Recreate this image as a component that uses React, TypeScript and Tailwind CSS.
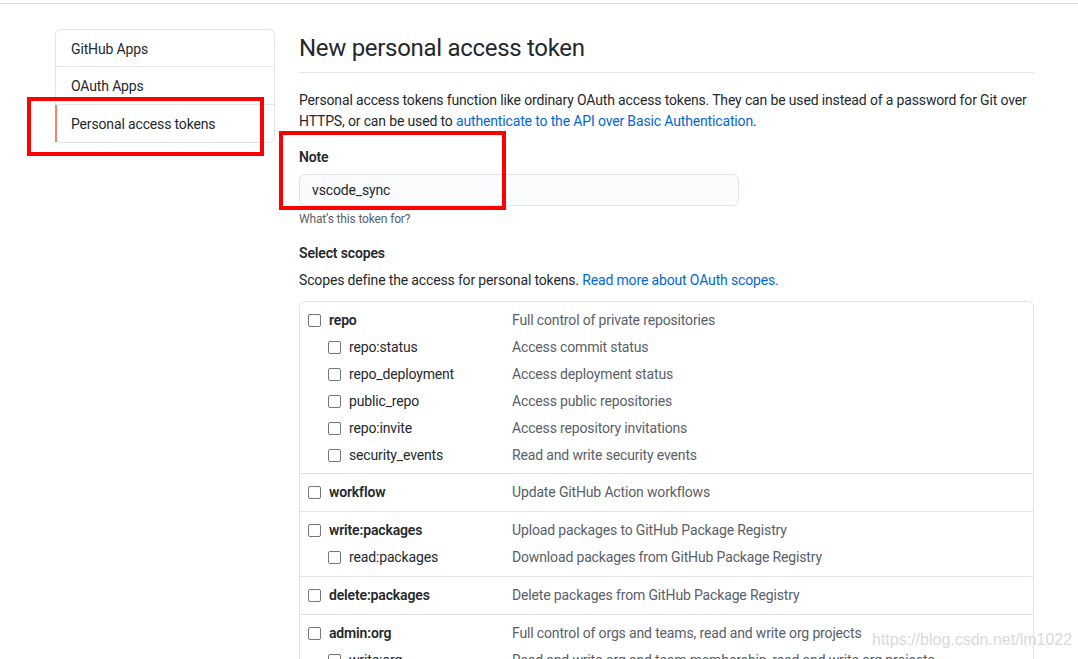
import React from "react";

type Scope = { name: string; desc: string; sub?: boolean };

const groups: Scope[][] = [
  [
    { name: "repo", desc: "Full control of private repositories" },
    { name: "repo:status", desc: "Access commit status", sub: true },
    { name: "repo_deployment", desc: "Access deployment status", sub: true },
    { name: "public_repo", desc: "Access public repositories", sub: true },
    { name: "repo:invite", desc: "Access repository invitations", sub: true },
    { name: "security_events", desc: "Read and write security events", sub: true },
  ],
  [{ name: "workflow", desc: "Update GitHub Action workflows" }],
  [
    { name: "write:packages", desc: "Upload packages to GitHub Package Registry" },
    { name: "read:packages", desc: "Download packages from GitHub Package Registry", sub: true },
  ],
  [{ name: "delete:packages", desc: "Delete packages from GitHub Package Registry" }],
  [
    { name: "admin:org", desc: "Full control of orgs and teams, read and write org projects" },
    { name: "write:org", desc: "Read and write org and team membership, read and write org projects", sub: true },
  ],
];

function Box() {
  return <span className="inline-block w-[13px] h-[13px] border border-[#767676] rounded-[2px] bg-white shrink-0" />;
}

function Row({ s }: { s: Scope }) {
  return (
    <div className="flex items-center h-[27px] pl-[8px]">
      <div className={"flex items-center w-[204px] shrink-0 " + (s.sub ? "pl-[20px]" : "")}>
        <Box />
        <span className={"ml-[8px] text-[#24292e] " + (s.sub ? "font-normal" : "font-semibold")}>{s.name}</span>
      </div>
      <span className="text-[#586069] whitespace-nowrap">{s.desc}</span>
    </div>
  );
}

export default function App() {
  return (
    <div
      className="relative w-[1078px] h-[659px] overflow-hidden bg-white text-[14px] leading-[21px] tracking-[-0.15px] text-[#24292e]"
      style={{ fontFamily: '"Segoe UI", Roboto, "Noto Sans", sans-serif' }}
    >
      <div className="h-[3px]" />
      <div className="h-px bg-[#d8dadd]" />
      <div className="flex ml-[55px] mt-[25px] gap-[24px]">
        {/* sidebar */}
        <div className="w-[220px] shrink-0">
          <div className="border border-[#e1e4e8] rounded-[6px]">
            <div className="h-[37px] flex items-center pl-[15px] pt-[2px] border-b border-[#e1e4e8]">GitHub Apps</div>
            <div className="h-[38px] flex items-center pl-[15px] pt-[2px] border-b border-[#e1e4e8]">OAuth Apps</div>
            <div className="relative h-[37px] flex items-center pl-[15px] pt-[2px]">
              <span className="absolute left-[-1px] top-0 bottom-0 w-[2px] bg-[#f9826c]" />
              Personal access tokens
            </div>
          </div>
        </div>
        {/* main */}
        <div className="w-[735px] shrink-0">
          <div className="pt-px pb-[6px] border-b border-[#e1e4e8]">
            <h1 className="text-[24px] leading-[36px] font-normal tracking-[-0.3px]">New personal access token</h1>
          </div>
          <p className="mt-[17px]">
            <span className="whitespace-nowrap">
              Personal access tokens function like ordinary OAuth access tokens. They can be used instead of a password for Git over
            </span>
            <br />
            HTTPS, or can be used to{" "}
            <span className="text-[#0366d6]">authenticate to the API over Basic Authentication</span>.
          </p>
          <div className="mt-[15px] font-semibold">Note</div>
          <div className="mt-[6px] w-[440px] h-[32px] flex items-center px-[12px] bg-[#fafbfc] border border-[#e1e4e8] rounded-[6px]">
            vscode_sync
          </div>
          <div className="mt-[4px] text-[12px] leading-[18px] text-[#586069]">What’s this token for?</div>
          <div className="mt-[15px] font-semibold">Select scopes</div>
          <div className="mt-[6px]">
            Scopes define the access for personal tokens.{" "}
            <span className="text-[#0366d6]">Read more about OAuth scopes.</span>
          </div>
          <div className="mt-[10px] border border-[#e1e4e8] rounded-t-[6px]">
            {groups.map((g, i) => (
              <div
                key={i}
                className={"pt-[5px] " + (i === 0 ? "pb-[4px] " : "pb-[5px] ") + (i < groups.length - 1 ? "border-b border-[#e1e4e8]" : "")}
              >
                {g.map((s) => (
                  <Row key={s.name} s={s} />
                ))}
              </div>
            ))}
          </div>
        </div>
      </div>

      {/* annotations */}
      <div className="absolute left-[27px] top-[97px] w-[237px] h-[59px] border-[4px] border-[#ff0000]" />
      <div className="absolute left-[279px] top-[131px] w-[227px] h-[79px] border-[4px] border-[#ff0000]" />
      <div
        className="absolute left-[872px] top-[630px] text-[16px] leading-[20px] tracking-normal text-[#d9d9d9] whitespace-nowrap"
        style={{ fontFamily: '"Liberation Sans", Arial, sans-serif' }}
      >
        https://blog.csdn.net/lm1022
      </div>
    </div>
  );
}
